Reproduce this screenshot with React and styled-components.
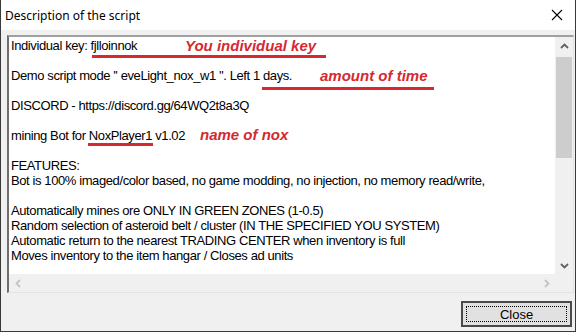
import React from 'react';
import styled, { createGlobalStyle } from 'styled-components';

const GlobalStyle = createGlobalStyle`
  html, body { margin: 0; padding: 0; background: #f0f0f0; }
  * { box-sizing: border-box; }
`;

const Window = styled.div`
  width: 576px;
  height: 332px;
  display: flex;
  flex-direction: column;
  background: #f0f0f0;
  border: 1px solid #3a3a3a;
  border-top: none;
  font-family: 'Liberation Sans', Arial, sans-serif;
`;

const TitleBar = styled.div`
  height: 30px;
  flex: none;
  display: flex;
  align-items: center;
  justify-content: space-between;
  background: #fff;
  padding: 0 12px 0 4px;
`;

const Title = styled.span`
  font-family: 'Noto Sans', sans-serif;
  font-size: 12px;
  color: #000;
`;

const Body = styled.div`
  flex: 1;
  display: flex;
  flex-direction: column;
  padding: 5px 1px 4px 6px;
`;

const EditFrame = styled.div`
  width: 567px;
  height: 258px;
  display: grid;
  grid-template-columns: 1fr 18px;
  grid-template-rows: 1fr 18px;
  border-top: 2px solid #a0a0a0;
  border-left: 2px solid #6e6e6e;
  border-right: 1px solid #e3e3e3;
  border-bottom: 1px solid #e3e3e3;
  background: #f0f0f0;
`;

const Content = styled.div`
  position: relative;
  background: #fff;
  overflow: hidden;
  padding: 1px 2px;
`;

const Line = styled.div`
  position: relative;
  height: 15px;
  font-family: 'Liberation Sans', Arial, sans-serif;
  font-size: 13px;
  letter-spacing: -0.4px;
  line-height: 15px;
  color: #000;
  white-space: pre;
`;

const Note = styled.span`
  position: absolute;
  left: ${(p) => p.x}px;
  top: ${(p) => p.y}px;
  font-family: 'Liberation Sans', Arial, sans-serif;
  font-weight: bold;
  font-style: italic;
  font-size: 15px;
  line-height: 17px;
  letter-spacing: 0;
  color: #d42a30;
  white-space: nowrap;
`;

const Mark = styled.span`
  position: absolute;
  left: ${(p) => p.x}px;
  top: ${(p) => p.y}px;
  width: ${(p) => p.w}px;
  height: 3px;
  background: #d42a30;
`;

const VScroll = styled.div`
  display: flex;
  flex-direction: column;
  align-items: center;
  background: #f0f0f0;
`;

const Arrow = styled.div`
  height: 18px;
  width: 100%;
  display: flex;
  align-items: center;
  justify-content: center;
  flex: none;
  color: ${(p) => (p.off ? '#c4c4c4' : '#606060')};
`;

const HArrow = styled(Arrow)`
  width: 18px;
`;

const Track = styled.div`
  flex: 1;
  width: 100%;
  padding: 2px 1px 0;
`;

const Thumb = styled.div`
  height: 101px;
  background: #cdcdcd;
`;

const HScroll = styled.div`
  display: flex;
  justify-content: space-between;
  align-items: center;
  background: #f0f0f0;
`;

const Corner = styled.div`
  background: #f0f0f0;
`;

const Footer = styled.div`
  flex: 1;
  display: flex;
  justify-content: flex-end;
  align-items: flex-end;
  padding-right: 2px;
`;

const Button = styled.button`
  width: 111px;
  height: 26px;
  padding: 3px;
  background: #e1e1e1;
  border: 2px solid #4a4a4a;
  font-family: 'Liberation Sans', Arial, sans-serif;
  font-size: 13px;
  color: #000;
`;

const Focus = styled.span`
  display: flex;
  align-items: center;
  justify-content: center;
  height: 100%;
  border: 1px dotted #000;
`;

const Chevron = ({ dir }) => {
  const d = {
    up: 'M1 6 L4.5 2.5 L8 6',
    down: 'M1 3 L4.5 6.5 L8 3',
    left: 'M6 1 L2.5 4.5 L6 8',
    right: 'M3 1 L6.5 4.5 L3 8',
  }[dir];
  return (
    <svg width="9" height="9" viewBox="0 0 9 9">
      <path d={d} fill="none" stroke="currentColor" strokeWidth="1.8" />
    </svg>
  );
};

const App = () => (
  <Window>
    <GlobalStyle />
    <TitleBar>
      <Title>Description of the script</Title>
      <svg width="12" height="12" viewBox="0 0 12 12">
        <path d="M1 1 L11 11 M11 1 L1 11" stroke="#000" strokeWidth="1.1" />
      </svg>
    </TitleBar>
    <Body>
      <EditFrame>
        <Content>
          <Line>
            Individual key: fjlloinnok
            <Note x={174} y={-1}>You individual key</Note>
            <Mark x={81} y={17} w={234} />
          </Line>
          <Line />
          <Line>
            Demo script mode '' eveLight_nox_w1 ''. Left 1 days.
            <Note x={309} y={-1}>amount of time</Note>
            <Mark x={251} y={19} w={172} />
          </Line>
          <Line />
          <Line>DISCORD - https://discord.gg/64WQ2t8a3Q</Line>
          <Line />
          <Line>
            mining Bot for NoxPlayer1 v1.02
            <Note x={189} y={-2}>name of nox</Note>
            <Mark x={77} y={15} w={65} />
          </Line>
          <Line />
          <Line>FEATURES:</Line>
          <Line>Bot is 100% imaged/color based, no game modding, no injection, no memory read/write,</Line>
          <Line />
          <Line>Automatically mines ore ONLY IN GREEN ZONES (1-0.5)</Line>
          <Line>Random selection of asteroid belt / cluster (IN THE SPECIFIED YOU SYSTEM)</Line>
          <Line>Automatic return to the nearest TRADING CENTER when inventory is full</Line>
          <Line>Moves inventory to the item hangar / Closes ad units</Line>
        </Content>
        <VScroll>
          <Arrow><Chevron dir="up" /></Arrow>
          <Track><Thumb /></Track>
          <Arrow><Chevron dir="down" /></Arrow>
        </VScroll>
        <HScroll>
          <HArrow off><Chevron dir="left" /></HArrow>
          <HArrow off><Chevron dir="right" /></HArrow>
        </HScroll>
        <Corner />
      </EditFrame>
      <Footer>
        <Button><Focus>Close</Focus></Button>
      </Footer>
    </Body>
  </Window>
);

export default App;
